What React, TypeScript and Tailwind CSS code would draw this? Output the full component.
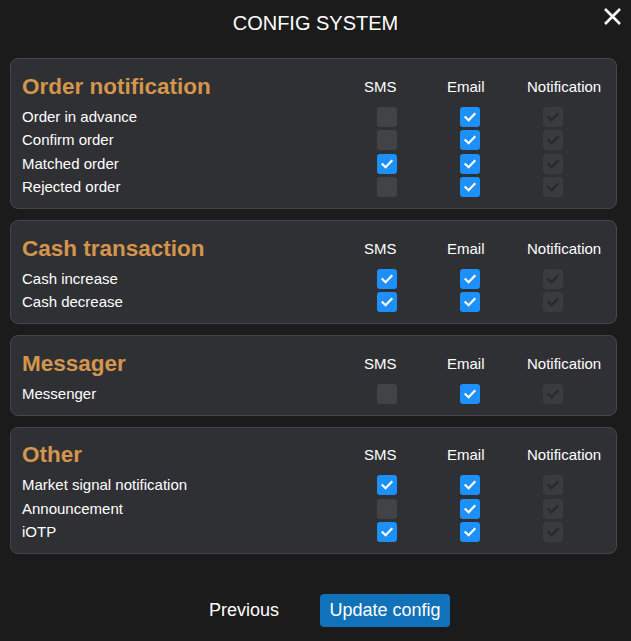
import React from "react";

type Row = { label: string; sms: boolean; email: boolean };
type Section = { title: string; rows: Row[] };

const sections: Section[] = [
  {
    title: "Order notification",
    rows: [
      { label: "Order in advance", sms: false, email: true },
      { label: "Confirm order", sms: false, email: true },
      { label: "Matched order", sms: true, email: true },
      { label: "Rejected order", sms: false, email: true },
    ],
  },
  {
    title: "Cash transaction",
    rows: [
      { label: "Cash increase", sms: true, email: true },
      { label: "Cash decrease", sms: true, email: true },
    ],
  },
  {
    title: "Messager",
    rows: [{ label: "Messenger", sms: false, email: true }],
  },
  {
    title: "Other",
    rows: [
      { label: "Market signal notification", sms: true, email: true },
      { label: "Announcement", sms: false, email: true },
      { label: "iOTP", sms: true, email: true },
    ],
  },
];

function Check({ checked, disabled }: { checked: boolean; disabled?: boolean }) {
  if (disabled) {
    return (
      <div className="w-[20px] h-[20px] rounded-[3px] bg-[#3a3b3d] flex items-center justify-center">
        <svg width="14" height="14" viewBox="0 0 14 14" fill="none">
          <path d="M2.5 7.2 L5.6 10.2 L11.5 4" stroke="#28292b" strokeWidth="2.2" strokeLinecap="square" />
        </svg>
      </div>
    );
  }
  if (checked) {
    return (
      <div className="w-[20px] h-[20px] rounded-[3px] bg-[#1e90fd] flex items-center justify-center">
        <svg width="14" height="14" viewBox="0 0 14 14" fill="none">
          <path d="M2.5 7.2 L5.6 10.2 L11.5 4" stroke="#ffffff" strokeWidth="2.2" strokeLinecap="square" />
        </svg>
      </div>
    );
  }
  return <div className="w-[20px] h-[20px] rounded-[3px] bg-[#424344]" />;
}

export default function App() {
  return (
    <div
      className="relative w-full min-h-[641px] bg-[#1b1b1b] text-[#f2f2f2]"
      style={{ fontFamily: '"Liberation Sans", Arial, sans-serif' }}
    >
      <div className="h-[46px] flex items-center justify-center text-[20px] text-white">
        CONFIG SYSTEM
      </div>
      <button className="absolute left-[603px] top-[7px] w-[19px] h-[19px] flex items-center justify-center">
        <svg width="19" height="19" viewBox="0 0 19 19" fill="none">
          <path d="M2 2 L17 17 M17 2 L2 17" stroke="#ffffff" strokeWidth="2.6" />
        </svg>
      </button>

      <div className="pl-[10px] pr-[14px] pt-[12px] flex flex-col gap-[11px]">
        {sections.map((s) => (
          <div
            key={s.title}
            className="bg-[#2f3034] border border-[#46474b] rounded-[8px] px-[11px] pt-[13px] pb-[9px]"
          >
            <div className="flex items-center h-[30px] mb-[3px]">
              <div className="flex-1 text-[22.5px] font-bold text-[#d4954c] leading-none">{s.title}</div>
              <div className="flex text-[15px] text-white">
                <span className="w-[83px]">SMS</span>
                <span className="w-[80px]">Email</span>
                <span className="w-[78px]">Notification</span>
              </div>
            </div>
            {s.rows.map((r) => (
              <div key={r.label} className="flex items-center h-[23.5px]">
                <div className="flex-1 text-[15px] text-white">{r.label}</div>
                <div className="flex pr-[11px]">
                  <div className="w-[83px] flex justify-center">
                    <Check checked={r.sms} />
                  </div>
                  <div className="w-[83px] flex justify-center">
                    <Check checked={r.email} />
                  </div>
                  <div className="w-[83px] flex justify-center">
                    <Check checked disabled />
                  </div>
                </div>
              </div>
            ))}
          </div>
        ))}
      </div>

      <div className="flex justify-center items-center gap-[29px] mt-[40px] pl-[16px]">
        <button className="h-[33px] px-[12px] text-[18px] text-white">Previous</button>
        <button className="h-[33px] w-[130px] rounded-[4px] bg-[#1171b9] text-[18px] text-white">
          Update config
        </button>
      </div>
    </div>
  );
}
